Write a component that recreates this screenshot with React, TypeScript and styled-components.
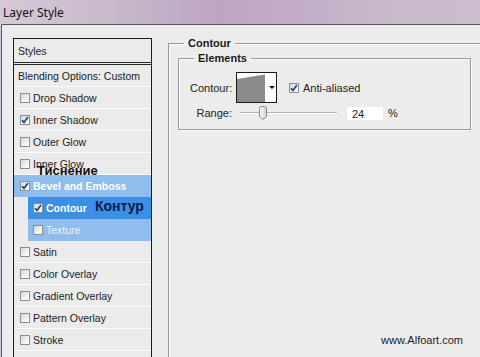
import React from 'react';
import styled, { createGlobalStyle } from 'styled-components';

const Global = createGlobalStyle`
  html, body { margin: 0; padding: 0; }
  body { width: 480px; height: 357px; overflow: hidden; font-family: "Liberation Sans", Arial, sans-serif; }
`;

const Window = styled.div`
  position: relative;
  width: 480px;
  height: 357px;
  overflow: hidden;
  display: flex;
  flex-direction: column;
  background: linear-gradient(90deg, #d4cad7 0%, #c9b9cd 22%, #bda6c2 45%, #c3adc7 62%, #c9b7cc 80%, #cdbdd0 100%);
`;

const TitleBar = styled.div`
  height: 24px;
  flex: none;
  display: flex;
  align-items: center;
  padding-left: 3px;
  font-family: "Noto Sans", "Open Sans", sans-serif;
  font-size: 12px;
  color: #141414;
`;

const Body = styled.div`
  flex: 1;
  margin-left: 1px;
  background: #ececec;
  border-top: 1px solid #555;
  border-left: 1px solid #555;
  border-top-left-radius: 2px;
  display: flex;
  align-items: flex-start;
  padding-left: 11px;
  overflow: hidden;
`;

const StylesPanel = styled.div`
  position: relative;
  flex: none;
  width: 139px;
  height: 330px;
  margin-top: 13px;
  box-sizing: border-box;
  border: 1px solid #1c1c1c;
  border-bottom: none;
  background: #ebebeb;
  font-size: 10.5px;
  color: #222;
`;

const HeaderRow = styled.div<{ $double?: boolean }>`
  box-sizing: border-box;
  height: ${p => (p.$double ? 26 : 22)}px;
  display: flex;
  align-items: center;
  padding-left: 4px;
  border-bottom: ${p => (p.$double ? '3px double #2a2a2a' : '1px solid #fbfbfb')};
`;

type Tone = 'none' | 'light' | 'dark';

const Row = styled.div<{ $indent?: boolean; $tone: Tone; $bold?: boolean }>`
  box-sizing: border-box;
  height: 22px;
  display: flex;
  align-items: center;
  gap: 3px;
  margin-left: ${p => (p.$indent ? 14 : 0)}px;
  padding-left: ${p => (p.$indent ? 5 : 6)}px;
  background: ${p => (p.$tone === 'dark' ? '#3b8fe5' : p.$tone === 'light' ? '#8ebdee' : 'transparent')};
  border-bottom: 1px solid ${p => (p.$tone === 'dark' ? '#3b8fe5' : p.$tone === 'light' ? '#8ebdee' : '#fbfbfb')};
  color: ${p => (p.$tone === 'none' ? '#222' : p.$bold ? '#ffffff' : '#eef3f9')};
  font-weight: ${p => (p.$bold ? 700 : 400)};
`;

const Box = styled.span<{ $on?: boolean }>`
  flex: none;
  width: 10px;
  height: 10px;
  box-sizing: border-box;
  border: 1px solid #8d8e8e;
  background: linear-gradient(135deg, #d6d6d6 0%, #f2f2f2 60%, #fdfdfd 100%);
  display: flex;
  align-items: center;
  justify-content: center;
`;

const Check = () => (
  <svg width="8" height="8" viewBox="0 0 8 8">
    <path d="M1 4.2 L3 6.4 L7 1" fill="none" stroke="#1f3d86" strokeWidth="1.7" />
  </svg>
);

const CheckBox = ({ on }: { on?: boolean }) => <Box $on={on}>{on && <Check />}</Box>;

const Overlay = styled.span<{ $size: number; $color: string }>`
  position: absolute;
  font-family: "Liberation Sans", Arial, sans-serif;
  font-weight: 700;
  font-size: ${p => p.$size}px;
  line-height: ${p => p.$size + 2}px;
  color: ${p => p.$color};
  white-space: nowrap;
`;

const RightArea = styled.div`
  flex: none;
  margin-left: 16px;
  margin-top: 11px;
`;

const Group = styled.fieldset`
  margin: 0;
  padding: 0;
  width: 330px;
  height: 340px;
  box-sizing: border-box;
  border: 1px solid #9a9a9a;
  box-shadow: inset 1px 1px 0 #fafafa;
`;

const SubGroup = styled.fieldset`
  margin: 1px 0 0 9px;
  padding: 0;
  width: 293px;
  height: 79px;
  box-sizing: border-box;
  border: 1px solid #9a9a9a;
  box-shadow: inset 1px 1px 0 #fafafa, 1px 1px 0 #fafafa;
`;

const Legend = styled.legend<{ $offset: number }>`
  margin-left: ${p => p.$offset}px;
  padding: 0 4px;
  font-size: 11px;
  line-height: 14px;
  font-weight: 700;
  color: #1a1a1a;
`;

const FieldRow = styled.div<{ $top: number; $h: number }>`
  display: flex;
  align-items: center;
  height: ${p => p.$h}px;
  margin-top: ${p => p.$top}px;
  padding-left: 11px;
  font-size: 11px;
  color: #222;
`;

const Label = styled.span`
  width: 42px;
  text-align: right;
  flex: none;
`;

const Thumb = styled.div`
  margin-left: 4px;
  width: 41px;
  height: 31px;
  box-sizing: border-box;
  border: 1px solid #1a1a1a;
  background: #fff;
  display: flex;
  align-items: center;
`;

const Arrow = styled.span`
  margin-left: 3px;
  width: 0;
  height: 0;
  border-left: 3px solid transparent;
  border-right: 3px solid transparent;
  border-top: 3px solid #111;
`;

const Inline = styled.span<{ $gap: number }>`
  display: flex;
  align-items: center;
  gap: 4px;
  margin-left: ${p => p.$gap}px;
`;

const Track = styled.div`
  position: relative;
  margin-left: 8px;
  width: 97px;
  height: 14px;
  display: flex;
  align-items: center;
`;

const TrackLine = styled.div`
  width: 100%;
  height: 1px;
  background: #b4b4b4;
  border-bottom: 1px solid #fdfdfd;
`;

const SliderKnob = styled.svg`
  position: absolute;
  top: 0;
`;

const NumInput = styled.div`
  margin-left: 10px;
  width: 36px;
  height: 13px;
  box-sizing: border-box;
  background: #fff;
  padding-left: 5px;
  font-size: 11px;
  line-height: 14px;
`;

const Percent = styled.span`
  margin-left: 5px;
`;

const Watermark = styled.span`
  position: absolute;
  right: 17px;
  bottom: 11px;
  font-family: "Liberation Sans", Arial, sans-serif;
  font-size: 11px;
  color: #1c1c1c;
`;

type Item = { label: string; on?: boolean; tone?: Tone; bold?: boolean; indent?: boolean };

const items: Item[] = [
  { label: 'Drop Shadow' },
  { label: 'Inner Shadow', on: true },
  { label: 'Outer Glow' },
  { label: 'Inner Glow' },
  { label: 'Bevel and Emboss', on: true, tone: 'light', bold: true },
  { label: 'Contour', on: true, tone: 'dark', bold: true, indent: true },
  { label: 'Texture', tone: 'light', indent: true },
  { label: 'Satin' },
  { label: 'Color Overlay' },
  { label: 'Gradient Overlay' },
  { label: 'Pattern Overlay' },
  { label: 'Stroke' },
];

const range = 24;

export default function App() {
  return (
    <Window>
      <Global />
      <TitleBar>Layer Style</TitleBar>
      <Body>
        <StylesPanel>
          <HeaderRow $double>Styles</HeaderRow>
          <HeaderRow>Blending Options: Custom</HeaderRow>
          {items.map(it => (
            <Row key={it.label} $tone={it.tone ?? 'none'} $bold={it.bold} $indent={it.indent}>
              <CheckBox on={it.on} />
              {it.label}
            </Row>
          ))}
          <Overlay $size={13} $color="#111" style={{ left: 23, top: 124 }}>Тиснение</Overlay>
          <Overlay $size={14} $color="#0b1a4d" style={{ left: 81, top: 159 }}>Контур</Overlay>
        </StylesPanel>
        <RightArea>
          <Group>
            <Legend $offset={15}>Contour</Legend>
            <SubGroup>
              <Legend $offset={15}>Elements</Legend>
              <FieldRow $top={7} $h={31}>
                <Label>Contour:</Label>
                <Thumb>
                  <svg width="29" height="29" viewBox="0 0 29 29">
                    <polygon points="0,6 28,1.5 28,29 0,29" fill="#8b8b8b" />
                  </svg>
                  <Arrow />
                </Thumb>
                <Inline $gap={12}>
                  <CheckBox on />
                  Anti-aliased
                </Inline>
              </FieldRow>
              <FieldRow $top={3} $h={14}>
                <Label>Range:</Label>
                <Track>
                  <TrackLine />
                  <SliderKnob width="8" height="14" viewBox="0 0 8 14" style={{ left: (range / 100) * 97 - 4 }}>
                    <defs>
                      <linearGradient id="kg" x1="0" x2="1" y1="0" y2="0">
                        <stop offset="0" stopColor="#fdfdfd" />
                        <stop offset="1" stopColor="#cfcfcf" />
                      </linearGradient>
                    </defs>
                    <path d="M0.5 2.5 Q0.5 0.5 2.5 0.5 L5.5 0.5 Q7.5 0.5 7.5 2.5 L7.5 10.5 L4 13.5 L0.5 10.5 Z" fill="url(#kg)" stroke="#8a8a8a" />
                  </SliderKnob>
                </Track>
                <NumInput>{range}</NumInput>
                <Percent>%</Percent>
              </FieldRow>
            </SubGroup>
          </Group>
        </RightArea>
      </Body>
      <Watermark>www.Alfoart.com</Watermark>
    </Window>
  );
}
